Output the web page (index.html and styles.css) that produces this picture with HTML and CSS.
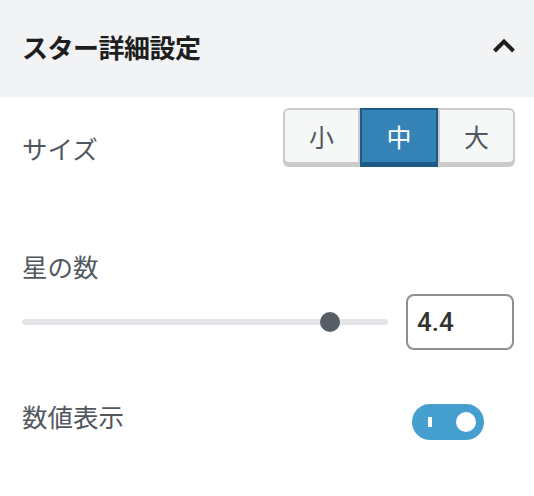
FILE: index.html
```html
<!DOCTYPE html>
<html lang="ja">
<head>
<meta charset="utf-8">
<link rel="stylesheet" href="styles.css">
</head>
<body>
<div class="panel">
  <div class="panel-header">
    <h2 class="panel-title">スター詳細設定</h2>
    <svg class="chevron" width="24" height="15" viewBox="0 0 24 15">
      <path d="M2.5 13 L12 3.5 L21.5 13" fill="none" stroke="#1e1e1e" stroke-width="4"/>
    </svg>
  </div>
  <div class="panel-body">
    <div class="size-row">
      <div class="label size-label">サイズ</div>
      <div class="btn-group">
        <div class="btn">小</div>
        <div class="btn active">中</div>
        <div class="btn">大</div>
      </div>
    </div>
    <div class="label count-label">星の数</div>
    <div class="slider-row">
      <div class="slider">
        <div class="track"></div>
        <div class="thumb" style="left: 298px"></div>
      </div>
      <input class="num" type="text" value="4.4">
    </div>
    <div class="toggle-row">
      <div class="label toggle-label">数値表示</div>
      <div class="toggle">
        <span class="toggle-bar"></span>
        <span class="toggle-knob"></span>
      </div>
    </div>
  </div>
</div>
</body>
</html>
```
FILE: styles.css
```css
* { box-sizing: border-box; }
html, body { margin: 0; padding: 0; background: #fff; }
body {
  width: 534px;
  height: 496px;
  font-family: "Noto Sans CJK JP", "Noto Sans", sans-serif;
  overflow: hidden;
}
.panel-header {
  height: 97px;
  background: #f2f3f5;
  display: flex;
  align-items: center;
  justify-content: space-between;
  padding: 0 18px 0 22px;
}
.panel-title {
  margin: 0;
  font-size: 26px;
  font-weight: 700;
  color: #1e1e1e;
  letter-spacing: -0.5px;
  line-height: 36px;
  margin-top: -4px;
}
.chevron { display: block; margin-top: -6px; }
.panel-body { padding: 0 19px 0 22px; }
.label {
  font-size: 25.5px;
  color: #50575e;
  line-height: 36px;
}
.size-row {
  display: flex;
  justify-content: space-between;
  align-items: flex-start;
  margin-top: 11px;
  height: 59px;
}
.size-label { margin-top: 22px; }
.btn-group { display: flex; }
.btn {
  width: 77px;
  height: 56px;
  background: #f6f7f7;
  border: 2px solid #cbcbcb;
  box-shadow: 0 3px 0 #cbcbcb;
  display: flex;
  align-items: center;
  justify-content: center;
  font-size: 25px;
  color: #50575e;
}
.btn:first-child { border-radius: 6px 0 0 6px; }
.btn:last-child { border-radius: 0 6px 6px 0; }
.btn.active {
  width: 78px;
  background: #3582b7;
  border-color: #1f5a84;
  box-shadow: 0 3px 0 #1f5a84;
  color: #fff;
}
.count-label { margin-top: 81px; }
.slider-row {
  display: flex;
  align-items: center;
  gap: 18px;
  margin-top: 10px;
  height: 56px;
}
.slider {
  position: relative;
  width: 366px;
  height: 20px;
  display: flex;
  align-items: center;
}
.track {
  width: 100%;
  height: 6px;
  border-radius: 3px;
  background: #e2e4e7;
}
.thumb {
  position: absolute;
  top: 0;
  width: 20px;
  height: 20px;
  border-radius: 50%;
  background: #555d66;
}
.num {
  width: 108px;
  height: 56px;
  border: 2px solid #8c8f94;
  border-radius: 8px;
  padding: 0 0 0 9px;
  font-family: Roboto, "Noto Sans", sans-serif;
  font-weight: 500;
  font-size: 26px;
  color: #333;
  outline: none;
  background: #fff;
}
.toggle-row {
  display: flex;
  justify-content: space-between;
  align-items: flex-start;
  margin-top: 54px;
}
.toggle-label { line-height: 26px; margin-top: -1px; }
.toggle {
  position: relative;
  width: 72px;
  height: 36px;
  border-radius: 18px;
  background: #459fcf;
  margin-right: 31px;
}
.toggle-bar {
  position: absolute;
  left: 16px;
  top: 13px;
  width: 4px;
  height: 10px;
  background: #fff;
}
.toggle-knob {
  position: absolute;
  right: 8px;
  top: 8px;
  width: 20px;
  height: 20px;
  border-radius: 50%;
  background: #fff;
}
```
